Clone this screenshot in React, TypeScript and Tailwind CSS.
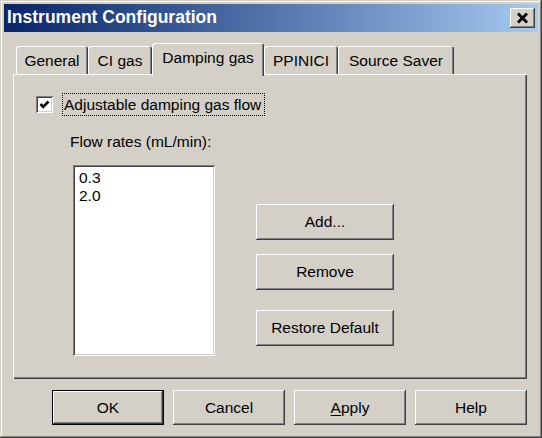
import { useState } from "react";

const raised =
  "shadow-[inset_-1px_-1px_#404040,inset_1px_1px_#ffffff,inset_-2px_-2px_#808080,inset_2px_2px_#d4d0c8]";
const sunken =
  "shadow-[inset_1px_1px_#808080,inset_-1px_-1px_#ffffff,inset_2px_2px_#404040,inset_-2px_-2px_#d4d0c8]";

const tabs = [
  { label: "General", w: "w-[72px]" },
  { label: "CI gas", w: "w-[64px]" },
  { label: "Damping gas", w: "w-[112px]" },
  { label: "PPINICI", w: "w-[74px]" },
  { label: "Source Saver", w: "w-[116px]" },
];

const Btn = ({ children, className = "" }: { children: React.ReactNode; className?: string }) => (
  <div
    className={`flex items-center justify-center bg-[#d4d0c8] text-[15.5px] text-black ${raised} ${className}`}
  >
    {children}
  </div>
);

const App = () => {
  const [checked] = useState(true);
  const active = "Damping gas";

  return (
    <div className="w-[542px] h-[438px] bg-[#d4d0c8] p-[4px] font-['Liberation_Sans',Arial,sans-serif] text-black shadow-[inset_-1px_-1px_#404040,inset_1px_1px_#d4d0c8,inset_-2px_-2px_#808080,inset_2px_2px_#ffffff] overflow-hidden">
      {/* title bar */}
      <div className="h-[28px] flex items-center justify-between pl-[3px] pr-[3px] bg-gradient-to-r from-[#0a246a] to-[#a6caf0]">
        <div className="text-white font-bold text-[17.5px] leading-none">Instrument Configuration</div>
        <div className={`w-[25px] h-[20px] bg-[#d4d0c8] flex items-center justify-center ${raised}`}>
          <svg width="13" height="12" viewBox="0 0 13 12">
            <path d="M2 1.5 L11 10.5 M11 1.5 L2 10.5" stroke="#000" strokeWidth="2.8" />
          </svg>
        </div>
      </div>

      <div className="pl-[9px] pr-[11px] pt-[11px] flex flex-col">
        {/* tabs */}
        <div className="h-[31px] flex items-end pl-[3px]">
          {tabs.map((t) =>
            t.label === active ? (
              <div
                key={t.label}
                className={`${t.w} h-[33px] mb-[-2px] relative z-10 bg-[#d4d0c8] rounded-t-[3px] flex items-center justify-center pb-[4px] text-[15.5px] shadow-[inset_1px_1px_#ffffff,inset_-1px_0_#404040,inset_-2px_0_#808080]`}
              >
                {t.label}
              </div>
            ) : (
              <div
                key={t.label}
                className={`${t.w} h-[28px] rounded-t-[3px] flex items-center justify-center pt-[1px] text-[15.5px] shadow-[inset_1px_1px_#ffffff,inset_-1px_0_#404040,inset_-2px_0_#808080]`}
              >
                {t.label}
              </div>
            )
          )}
        </div>

        {/* panel */}
        <div className="h-[305px] flex flex-col pt-[19px] pl-[23px] shadow-[inset_1px_1px_#ffffff,inset_-1px_-1px_#404040,inset_-2px_-2px_#808080]">
          <div className="flex items-center h-[23px]">
            <div className={`w-[17px] h-[17px] bg-white flex items-center justify-center ${sunken}`}>
              {checked && (
                <svg width="11" height="11" viewBox="0 0 11 11">
                  <path d="M1.5 5 L4.2 7.8 L9.5 2.5" stroke="#000" strokeWidth="2.6" fill="none" />
                </svg>
              )}
            </div>
            <div className="ml-[9px] w-[203px] h-[23px] border border-dotted border-black overflow-hidden whitespace-nowrap pl-[1px] text-[15.5px] leading-[21px]">
              Adjustable damping gas flow
            </div>
          </div>

          <div className="ml-[34px] mt-[17px] text-[15.5px] leading-[18px]">Flow rates (mL/min):</div>

          <div className="flex items-start mt-[14px] ml-[37px]">
            <div className={`w-[142px] h-[191px] bg-white pt-[4px] pl-[6px] text-[15.5px] leading-[18px] ${sunken}`}>
              <div>0.3</div>
              <div>2.0</div>
            </div>
            <div className="ml-[41px] mt-[39px] flex flex-col">
              <Btn className="w-[138px] h-[36px]">Add...</Btn>
              <Btn className="w-[138px] h-[36px] mt-[14px]">Remove</Btn>
              <Btn className="w-[138px] h-[36px] mt-[20px]">Restore Default</Btn>
            </div>
          </div>
        </div>

        {/* dialog buttons */}
        <div className="mt-[11px] flex justify-end gap-[9px]">
          <div className="w-[112px] h-[35px] border border-black flex">
            <Btn className="flex-1">OK</Btn>
          </div>
          <Btn className="w-[112px] h-[35px]">Cancel</Btn>
          <Btn className="w-[112px] h-[35px]">
            <span>
              <span className="underline underline-offset-2">A</span>pply
            </span>
          </Btn>
          <Btn className="w-[112px] h-[35px]">Help</Btn>
        </div>
      </div>
    </div>
  );
};

export default App;
